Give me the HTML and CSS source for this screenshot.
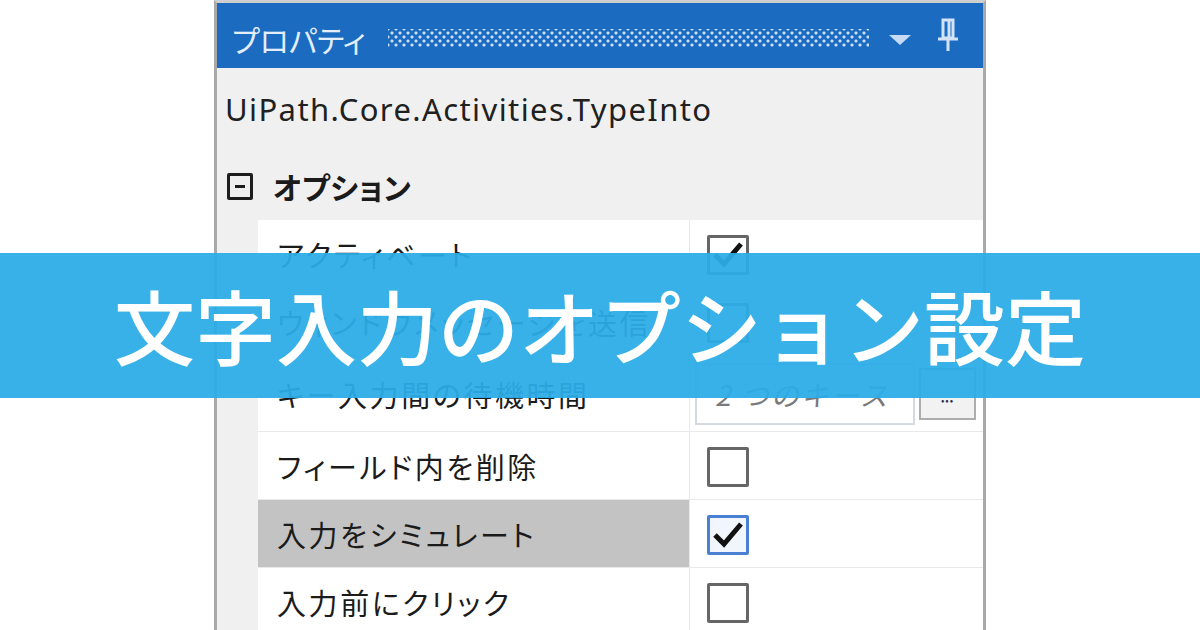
FILE: index.html
```html
<!doctype html>
<html lang="ja">
    <head>
        <meta charset="utf-8">
        <title>文字入力のオプション設定</title>
        <meta name="viewport" content="width=device-width, initial-scale=1">
        <link rel="stylesheet" href="styles.css">
    </head>
    <body>
        <section class="panel">
            <header class="titlebar">
                <span class="title">プロパティ</span>
                <span class="grip"></span>
                <svg class="menu-arrow" width="22" height="10" viewBox="0 0 22 10">
                    <path d="M0 0 H22 L11 10 Z" fill="#c6dbf3"/>
                </svg>
                <svg class="pin" width="26" height="34" viewBox="0 0 26 34">
                    <path d="M8 2 H18 V20 H8 Z M14 3 V19" fill="none" stroke="#d3e3f6" stroke-width="3"/>
                    <path d="M3 21 H23" stroke="#d3e3f6" stroke-width="3"/>
                    <path d="M13 21 V33" stroke="#d3e3f6" stroke-width="3"/>
                </svg>
            </header>
            <div class="type-name">UiPath.Core.Activities.TypeInto</div>
            <div class="category">
                <span class="toggle"></span>
                <span class="category-name">オプション</span>
            </div>
            <div class="grid">
                <div class="row">
                    <div class="label">アクティベート</div>
                    <div class="value">
                        <span class="check">
                            <svg width="36" height="34" viewBox="0 0 36 34"><path d="M5 17 L14 26 L31 6" fill="none" stroke="#111" stroke-width="5"/></svg>
                        </span>
                    </div>
                </div>
                <div class="row">
                    <div class="label">ウィンドウメッセージを送信</div>
                    <div class="value"><span class="check"></span></div>
                </div>
                <div class="row tall">
                    <div class="label">キー入力間の待機時間</div>
                    <div class="value">
                        <span class="field">2 つのキース</span>
                        <span class="more">•••</span>
                    </div>
                </div>
                <div class="row">
                    <div class="label">フィールド内を削除</div>
                    <div class="value"><span class="check"></span></div>
                </div>
                <div class="row selected">
                    <div class="label">入力をシミュレート</div>
                    <div class="value">
                        <span class="check focus">
                            <svg width="36" height="34" viewBox="0 0 36 34"><path d="M5 17 L14 26 L31 6" fill="none" stroke="#111" stroke-width="5"/></svg>
                        </span>
                    </div>
                </div>
                <div class="row">
                    <div class="label">入力前にクリック</div>
                    <div class="value"><span class="check"></span></div>
                </div>
                <div class="row">
                    <div class="label"></div>
                    <div class="value"></div>
                </div>
            </div>
        </section>
        <div class="banner">文字入力のオプション設定</div>
    </body>
</html>
```

FILE: styles.css
```css
html,
body {
    margin: 0;
    padding: 0;
}

body {
    width: 1200px;
    height: 630px;
    overflow: hidden;
    position: relative;
    background: #fff;
    color: #1b1b1b;
    font-family: "Noto Sans CJK JP", "Noto Sans", sans-serif;
}

.panel {
    margin-left: 214px;
    width: 766px;
    height: 627px;
    overflow: hidden;
    background: #f0f0f0;
    border: 3px solid #a9a9a9;
    border-top-color: #cfcfcf;
    border-bottom: none;
}

.titlebar {
    height: 65px;
    background: #1b6bc0;
    display: flex;
    align-items: center;
    padding: 0 22px 0 15px;
}
.title {
    color: #e4eefa;
    font-size: 30px;
    line-height: 1;
    margin-top: 6px;
    font-feature-settings: "palt";
}
.grip {
    flex: 1;
    height: 18px;
    margin: 4px 20px 0 22px;
    background:
        radial-gradient(circle, rgba(214, 230, 250, .95) 1.3px, transparent 1.8px) 0 0 / 8px 8px,
        radial-gradient(circle, rgba(214, 230, 250, .95) 1.3px, transparent 1.8px) 4px 4px / 8px 8px;
}
.menu-arrow {
    margin: 8px 24px 0 0;
}
.pin {
    margin-top: -2px;
}

.type-name {
    font-family: "Noto Sans", sans-serif;
    font-size: 31px;
    letter-spacing: 1.4px;
    color: #202020;
    height: 70px;
    padding: 20px 0 0 8px;
    box-sizing: border-box;
}

.category {
    display: flex;
    align-items: center;
    height: 82px;
    padding: 14px 0 0 10px;
    box-sizing: border-box;
}
.toggle {
    width: 20px;
    height: 21px;
    border: 3px solid #1d1d1d;
    border-radius: 2px;
    position: relative;
    margin-right: 20px;
}
.toggle::after {
    content: "";
    position: absolute;
    left: 5px;
    right: 5px;
    top: 9px;
    height: 3px;
    background: #1d1d1d;
}
.category-name {
    font-size: 30px;
    font-weight: 700;
    font-feature-settings: "palt";
    letter-spacing: 0.5px;
}

.grid {
    margin-left: 41px;
}
.row {
    display: flex;
    height: 67px;
    background: #fff;
    border-bottom: 1px solid #e9e9e9;
}
.row.tall {
    height: 75px;
}
.label {
    width: 432px;
    box-sizing: border-box;
    border-right: 1px solid #e9e9e9;
    padding-left: 19px;
    display: flex;
    align-items: center;
    font-size: 29px;
    font-feature-settings: "palt";
    letter-spacing: 2.6px;
}
.selected .label {
    background: #c3c3c3;
}
.value {
    flex: 1;
    display: flex;
    align-items: center;
    padding-left: 17px;
}
.tall .value {
    padding-left: 5px;
}

.check {
    width: 36px;
    height: 34px;
    border: 3px solid #666;
    border-radius: 2px;
    background: #fff;
    margin-top: 2px;
}
.check svg {
    display: block;
}
.check.focus {
    border-color: #4a80d4;
    background: #f1f6fd;
}

.field {
    height: 62px;
    width: 220px;
    border: 2px solid #d3dae4;
    background: #fff;
    color: #7a7a7a;
    font-style: italic;
    font-size: 28px;
    display: flex;
    align-items: center;
    padding-left: 18px;
    box-sizing: border-box;
    letter-spacing: 2px;
}
.more {
    width: 57px;
    height: 52px;
    margin-left: 4px;
    border: 2px solid #adadad;
    background: #f2f2f2;
    box-sizing: border-box;
    color: #2a2f5a;
    font-size: 10px;
    letter-spacing: 1px;
    display: flex;
    align-items: center;
    justify-content: center;
    padding-top: 12px;
}

.banner {
    position: absolute;
    left: 0;
    right: 0;
    top: 253px;
    height: 145px;
    background: rgba(44, 172, 232, .94);
    color: #fff;
    font-size: 81px;
    font-weight: 500;
    display: flex;
    align-items: center;
    justify-content: center;
    padding-bottom: 4px;
    box-sizing: border-box;
}
```
